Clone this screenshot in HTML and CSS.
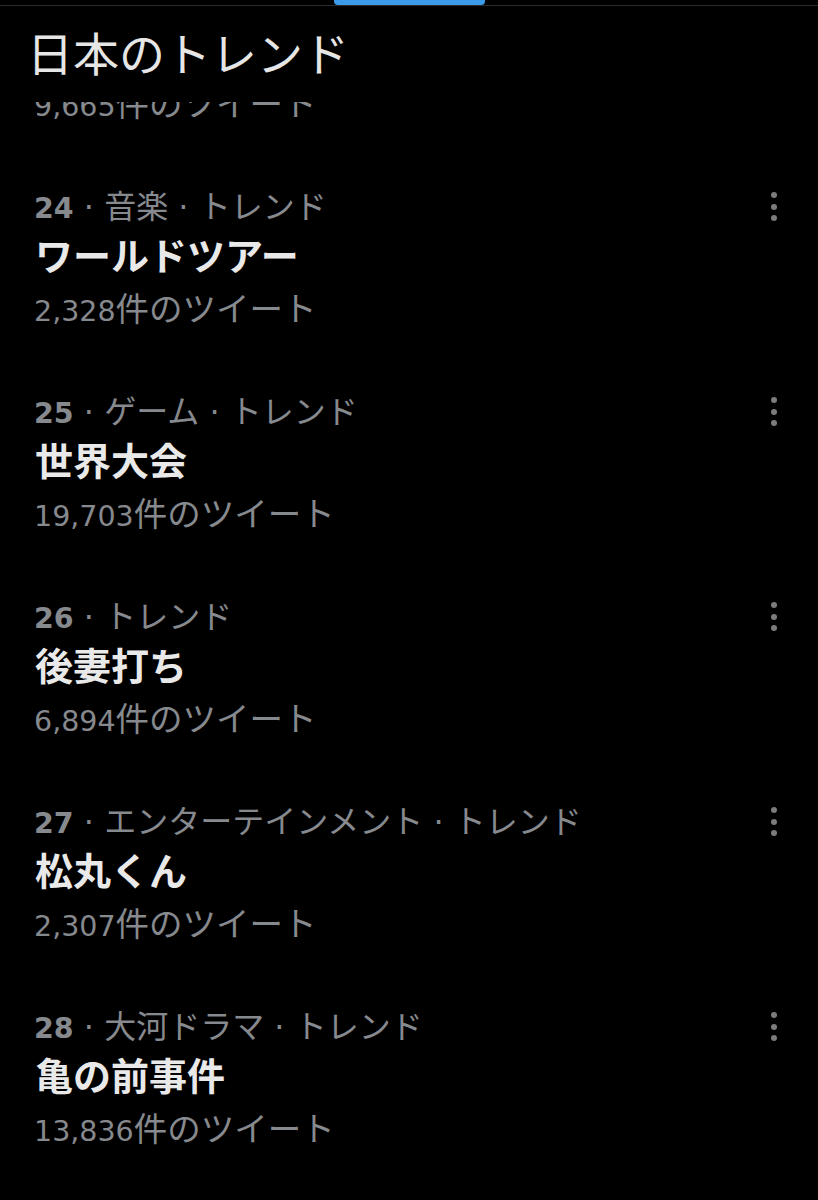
FILE: index.html
```html
<!DOCTYPE html>
<html lang="ja">
<head>
  <meta charset="UTF-8" />
  <title>日本のトレンド</title>
  <link rel="stylesheet" href="styles.css">
</head>
<body>
  <div class="tabbar">
    <div class="tab-indicator"></div>
  </div>

  <h2 class="page-title">日本のトレンド</h2>

  <div class="trend-list">
    <!-- previous item, scrolled under the header -->
    <div class="trend trend-partial">
      <div class="trend-body">
        <div class="count"><span class="num">9,665</span>件のツイート</div>
      </div>
    </div>

    <div class="trend">
      <div class="trend-body">
        <div class="meta"><span class="rank">24</span> · 音楽 · トレンド</div>
        <div class="name">ワールドツアー</div>
        <div class="count"><span class="num">2,328</span>件のツイート</div>
      </div>
      <div class="more"><i></i><i></i><i></i></div>
    </div>

    <div class="trend">
      <div class="trend-body">
        <div class="meta"><span class="rank">25</span> · ゲーム · トレンド</div>
        <div class="name">世界大会</div>
        <div class="count"><span class="num">19,703</span>件のツイート</div>
      </div>
      <div class="more"><i></i><i></i><i></i></div>
    </div>

    <div class="trend">
      <div class="trend-body">
        <div class="meta"><span class="rank">26</span> · トレンド</div>
        <div class="name">後妻打ち</div>
        <div class="count"><span class="num">6,894</span>件のツイート</div>
      </div>
      <div class="more"><i></i><i></i><i></i></div>
    </div>

    <div class="trend">
      <div class="trend-body">
        <div class="meta"><span class="rank">27</span> · エンターテインメント · トレンド</div>
        <div class="name">松丸くん</div>
        <div class="count"><span class="num">2,307</span>件のツイート</div>
      </div>
      <div class="more"><i></i><i></i><i></i></div>
    </div>

    <div class="trend">
      <div class="trend-body">
        <div class="meta"><span class="rank">28</span> · 大河ドラマ · トレンド</div>
        <div class="name">亀の前事件</div>
        <div class="count"><span class="num">13,836</span>件のツイート</div>
      </div>
      <div class="more"><i></i><i></i><i></i></div>
    </div>
  </div>
</body>
</html>
```

FILE: styles.css
```css
html, body {
  background-color: #000;
}
body {
  margin: 0;
  width: 818px;
  height: 1200px;
  overflow: hidden;
  font-family: "DejaVu Sans", "Noto Sans CJK JP", sans-serif;
  color: #e7e9ea;
}

/* Tab bar */
.tabbar {
  display: flex;
  justify-content: center;
  height: 5px;
  border-bottom: 1px solid #2a2c2f;
}
.tab-indicator {
  width: 151px;
  height: 5px;
  background-color: #3b9bea;
  border-radius: 0 0 4px 4px;
}

/* Header */
.page-title {
  margin: 0;
  height: 96px;
  padding-left: 27px;
  font-family: "Noto Sans CJK JP", sans-serif;
  font-size: 46px;
  font-weight: 400;
  line-height: 90px;
  color: #e6e6e6;
  box-sizing: border-box;
}

/* Trends */
.trend-list {
  overflow: hidden;
}
.trend {
  display: flex;
  align-items: flex-start;
  padding: 26px 41px 26px 34px;
}
.trend-partial {
  margin-top: -23px;
  padding-top: 0;
}
.trend-body {
  flex: 1;
}
.meta,
.count {
  height: 51px;
  font-size: 32px;
  line-height: 51px;
  color: #86898d;
  white-space: nowrap;
}
.count {
  font-size: 33.5px;
}
.num,
.rank {
  font-size: 28.5px;
  line-height: 1;
}
.rank {
  font-weight: bold;
}
.name {
  height: 51px;
  font-family: "Noto Sans CJK JP", sans-serif;
  font-size: 38px;
  font-weight: bold;
  line-height: 42px;
  color: #e9e9e9;
  padding-left: 1px;
}
.more {
  display: flex;
  flex-direction: column;
  align-items: center;
  gap: 5.5px;
  margin-top: 10px;
}
.more i {
  display: block;
  width: 6px;
  height: 6px;
  border-radius: 50%;
  background-color: #7c7c7c;
}
```
